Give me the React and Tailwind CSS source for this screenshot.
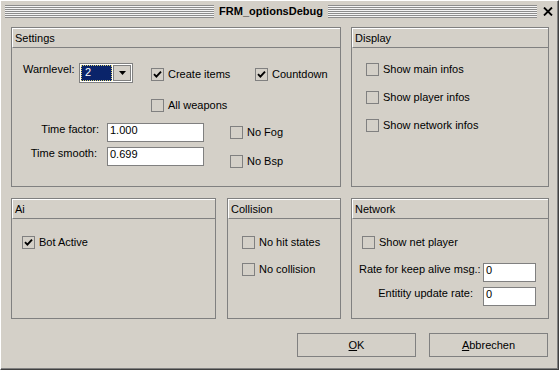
import React from 'react';

function Check() {
  return (
    <svg width="9" height="9" viewBox="0 0 9 9">
      <path d="M1 4.2 L3.4 6.6 L8 1.6" fill="none" stroke="#000" strokeWidth="1.9" />
    </svg>
  );
}

function CheckBox({ label, checked, className = '' }) {
  return (
    <div className={`flex items-center gap-[4px] ${className}`}>
      <div className="w-[13px] h-[13px] border border-[#808080] flex items-center justify-center shrink-0">
        {checked && <Check />}
      </div>
      <span className="leading-[13px] whitespace-nowrap">{label}</span>
    </div>
  );
}

function TextBox({ value, className = '' }) {
  return (
    <div className={`h-[19px] border border-[#808080] bg-white pl-[2px] leading-[13px] ${className}`}>
      {value}
    </div>
  );
}

function Panel({ title, className = '', bodyClass = '', children }) {
  return (
    <div className={`flex flex-col border border-[#808080] ${className}`}>
      <div className="h-[20px] border-t border-l border-t-white border-l-white border-b border-b-[#808080] flex items-center pl-[2px] leading-[13px]">
        {title}
      </div>
      <div className={`flex-1 flex flex-col ${bodyClass}`}>{children}</div>
    </div>
  );
}

function Stripes() {
  return (
    <div className="flex-1 h-[13px] bg-[repeating-linear-gradient(to_bottom,#8c8c8c_0px,#8c8c8c_1px,#f4f4f4_1px,#f4f4f4_2px)]" />
  );
}

function Button({ children }) {
  return (
    <div className="w-[119px] h-[24px] border border-[#808080] flex items-center justify-center leading-[13px]">
      {children}
    </div>
  );
}

export default function App() {
  return (
    <div className="w-[559px] h-[370px] bg-[#d4d0c8] text-black text-[11px] font-[family-name:'Liberation_Sans',Arial,sans-serif] border-l border-t border-l-white border-t-white border-r border-b border-r-[#404040] border-b-[#404040] shadow-[inset_-1px_-1px_0_#808080] flex flex-col">
      {/* title bar */}
      <div className="flex items-center h-[14px] mt-[3px] pl-[4px] pr-[5px]">
        <Stripes />
        <span className="font-bold mx-[5px] leading-[14px]">FRM_optionsDebug</span>
        <Stripes />
        <div className="ml-[6px] w-[10px] flex items-center justify-center">
          <svg width="10" height="9" viewBox="0 0 10 9">
            <path d="M1 0.5 L9 8.5 M9 0.5 L1 8.5" stroke="#000" strokeWidth="1.8" />
          </svg>
        </div>
      </div>

      {/* first row */}
      <div className="flex mt-[9px] pl-[10px]">
        <Panel title="Settings" className="w-[330px] h-[160px]" bodyClass="pl-[11px] pt-[15px]">
          <div className="flex items-start h-[20px]">
            <span className="w-[56px] leading-[13px]">Warnlevel:</span>
            <div className="w-[54px] h-[20px] border border-[#808080] bg-white p-[1px] flex">
              <div className="w-[31px] bg-[#0a246a] border border-dotted border-[#d8d070] text-white pl-[3px] leading-[13px]">
                2
              </div>
              <div className="ml-[1px] w-[18px] border border-[#808080] bg-[#d4d0c8] flex items-center justify-center">
                <svg width="7" height="4" viewBox="0 0 7 4">
                  <path d="M0 0 H7 L3.5 4 Z" fill="#000" />
                </svg>
              </div>
            </div>
            <CheckBox label="Create items" checked className="ml-[18px] mt-[5px] w-[104px]" />
            <CheckBox label="Countdown" checked className="mt-[5px]" />
          </div>
          <CheckBox label="All weapons" className="ml-[128px] mt-[16px]" />
          <div className="flex mt-[11px]">
            <div className="flex flex-col gap-[5px]">
              <div className="flex items-start">
                <span className="w-[84px] text-right pr-[8px] leading-[13px]">Time factor:</span>
                <TextBox value="1.000" className="w-[97px]" />
              </div>
              <div className="flex items-start">
                <span className="w-[84px] text-right pr-[10px] leading-[13px]">Time smooth:</span>
                <TextBox value="0.699" className="w-[97px]" />
              </div>
            </div>
            <div className="flex flex-col ml-[26px] mt-[3px] gap-[16px]">
              <CheckBox label="No Fog" />
              <CheckBox label="No Bsp" />
            </div>
          </div>
        </Panel>

        <Panel title="Display" className="w-[198px] h-[160px] ml-[10px]" bodyClass="pl-[14px] pt-[15px] gap-[15px]">
          <CheckBox label="Show main infos" />
          <CheckBox label="Show player infos" />
          <CheckBox label="Show network infos" />
        </Panel>
      </div>

      {/* second row */}
      <div className="flex mt-[11px] pl-[10px]">
        <Panel title="Ai" className="w-[205px] h-[121px]" bodyClass="pl-[10px] pt-[17px]">
          <CheckBox label="Bot Active" checked />
        </Panel>

        <Panel title="Collision" className="w-[114px] h-[121px] ml-[11px]" bodyClass="pl-[14px] pt-[17px] gap-[14px]">
          <CheckBox label="No hit states" />
          <CheckBox label="No collision" />
        </Panel>

        <Panel title="Network" className="w-[198px] h-[121px] ml-[10px]" bodyClass="pl-[10px] pt-[17px]">
          <CheckBox label="Show net player" />
          <div className="flex flex-col gap-[5px] mt-[14px] -ml-[3px]">
            <div className="flex items-start">
              <span className="w-[124px] leading-[13px] whitespace-nowrap">Rate for keep alive msg.:</span>
              <TextBox value="0" className="w-[53px]" />
            </div>
            <div className="flex items-start">
              <span className="w-[124px] text-right pr-[10px] leading-[13px] whitespace-nowrap">Entitity update rate:</span>
              <TextBox value="0" className="w-[53px]" />
            </div>
          </div>
        </Panel>
      </div>

      {/* buttons */}
      <div className="flex mt-[14px] pl-[296px] gap-[13px]">
        <Button>
          <span><span className="underline">O</span>K</span>
        </Button>
        <Button>
          <span><span className="underline">A</span>bbrechen</span>
        </Button>
      </div>
    </div>
  );
}
